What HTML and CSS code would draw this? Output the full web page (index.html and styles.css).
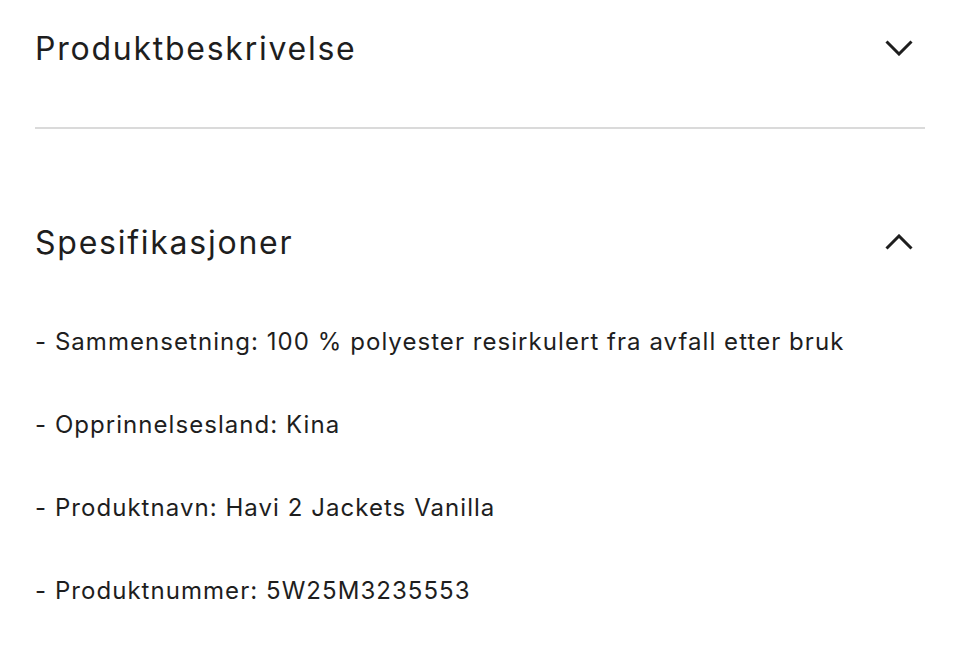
FILE: index.html
```html
<!DOCTYPE html>
<html lang="no">
<head>
<meta charset="utf-8">
<link rel="stylesheet" href="styles.css">
</head>
<body>
<div class="page">
  <section class="acc">
    <div class="acc-head">
      <h2 class="acc-title">Produktbeskrivelse</h2>
      <svg class="chev" width="28" height="16" viewBox="0 0 28 16"><path d="M1.5 1.5 L14 14 L26.5 1.5" fill="none" stroke="#1e1e1e" stroke-width="3"/></svg>
    </div>
  </section>
  <div class="divider"></div>
  <section class="acc open">
    <div class="acc-head">
      <h2 class="acc-title">Spesifikasjoner</h2>
      <svg class="chev" width="28" height="16" viewBox="0 0 28 16"><path d="M1.5 14.5 L14 2 L26.5 14.5" fill="none" stroke="#1e1e1e" stroke-width="3"/></svg>
    </div>
    <ul class="specs">
      <li>- Sammensetning: 100 % polyester resirkulert fra avfall etter bruk</li>
      <li>- Opprinnelsesland: Kina</li>
      <li>- Produktnavn: Havi 2 Jackets Vanilla</li>
      <li>- Produktnummer: 5W25M3235553</li>
    </ul>
  </section>
</div>
</body>
</html>
```

FILE: styles.css
```css
html, body {
  margin: 0;
  padding: 0;
  background: #ffffff;
}
body {
  font-family: "Inter", "Noto Sans", sans-serif;
  color: #1e1e1e;
}
.page {
  padding: 0 35px;
}
.acc-head {
  display: flex;
  align-items: center;
  justify-content: space-between;
  height: 96px;
}
.acc-title {
  margin: 0;
  font-size: 32px;
  font-weight: 400;
  letter-spacing: 1.75px;
}
.chev {
  display: block;
  margin-right: 12px;
}
.divider {
  margin-top: 31px;
  height: 2px;
  background: #dadada;
}
.acc.open {
  margin-top: 65px;
}
.specs {
  list-style: none;
  margin: 10px 0 0;
  padding: 0;
}
.specs li {
  font-size: 24px;
  line-height: 83px;
  height: 83px;
  letter-spacing: 1.05px;
}
```
